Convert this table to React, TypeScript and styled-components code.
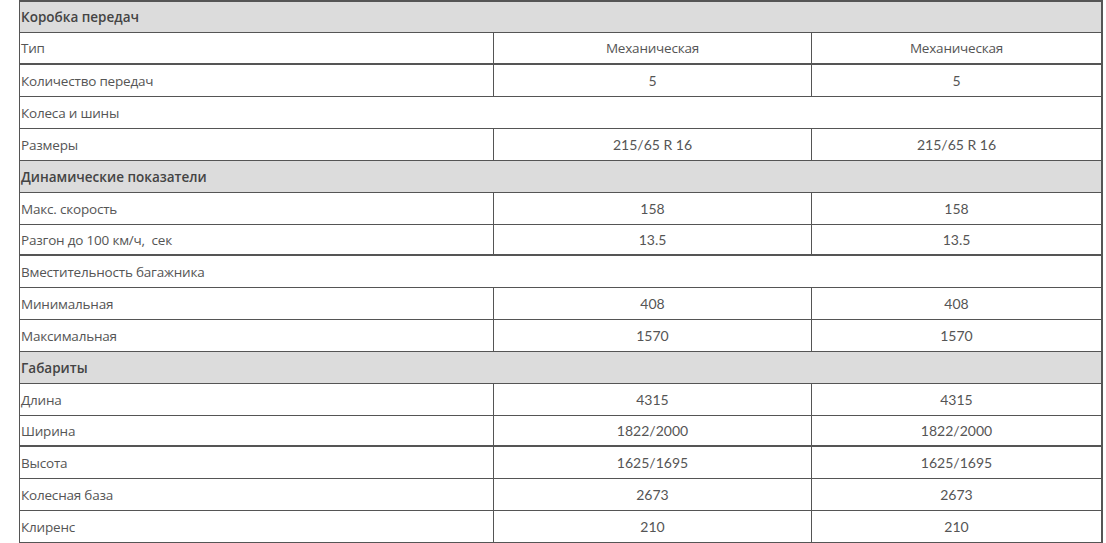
import styled, { createGlobalStyle } from 'styled-components';

const GlobalStyle = createGlobalStyle`
  html, body {
    margin: 0;
    padding: 0;
    background: #ffffff;
  }
`;

const Page = styled.div`
  padding: 0 0 0 19px;
  box-sizing: border-box;
  width: 1106px;
`;

const Table = styled.div`
  width: 1084px;
  box-sizing: border-box;
  border-top: 2px solid #555;
  border-left: 1px solid #555;
  border-right: 2px solid #555;
  display: flex;
  flex-direction: column;
`;

// height is the content height; thick rows carry a 2px bottom rule
const Row = styled.div<{ $thick?: boolean; $section?: boolean; $h?: number }>`
  display: grid;
  grid-template-columns: 473px 318px 1fr;
  height: ${(p) => p.$h ?? 31}px;
  border-bottom: ${(p) => (p.$thick ? '2px' : '1px')} solid #555;
  background: ${(p) => (p.$section ? '#dcdcdc' : '#ffffff')};
`;

const Label = styled.div<{ $span?: boolean; $bold?: boolean }>`
  grid-column: ${(p) => (p.$span ? '1 / -1' : 'auto')};
  display: flex;
  align-items: center;
  padding-left: 1px;
  white-space: pre;
  font-family: 'Open Sans', 'Liberation Sans', sans-serif;
  font-size: 13.5px;
  font-weight: ${(p) => (p.$bold ? 600 : 400)};
  color: ${(p) => (p.$bold ? '#444' : '#555')};
  letter-spacing: ${(p) => (p.$bold ? '0' : '-0.2px')};
`;

const Value = styled.div<{ $num?: boolean }>`
  display: flex;
  align-items: center;
  justify-content: center;
  border-left: 1px solid #555;
  font-family: ${(p) => (p.$num ? "Lato, 'Open Sans', sans-serif" : "'Open Sans', 'Liberation Sans', sans-serif")};
  font-size: ${(p) => (p.$num ? '14px' : '13.5px')};
  color: #555;
  letter-spacing: ${(p) => (p.$num ? '0' : '-0.2px')};
`;

type Spec =
  | { kind: 'section'; title: string; h?: number }
  | { kind: 'group'; title: string }
  | { kind: 'row'; title: string; value: string; thick?: boolean; h?: number };

const specs: Spec[] = [
  { kind: 'section', title: 'Коробка передач', h: 30 },
  { kind: 'row', title: 'Тип', value: 'Механическая', thick: true, h: 30 },
  { kind: 'row', title: 'Количество передач', value: '5' },
  { kind: 'group', title: 'Колеса и шины' },
  { kind: 'row', title: 'Размеры', value: '215/65 R 16' },
  { kind: 'section', title: 'Динамические показатели' },
  { kind: 'row', title: 'Макс. скорость', value: '158' },
  { kind: 'row', title: 'Разгон до 100 км/ч,  сек', value: '13.5', thick: true, h: 29 },
  { kind: 'group', title: 'Вместительность багажника' },
  { kind: 'row', title: 'Минимальная', value: '408' },
  { kind: 'row', title: 'Максимальная', value: '1570' },
  { kind: 'section', title: 'Габариты' },
  { kind: 'row', title: 'Длина', value: '4315' },
  { kind: 'row', title: 'Ширина', value: '1822/2000', thick: true, h: 29 },
  { kind: 'row', title: 'Высота', value: '1625/1695' },
  { kind: 'row', title: 'Колесная база', value: '2673' },
  { kind: 'row', title: 'Клиренс', value: '210' },
];

const isNumeric = (v: string) => /^[\d./\sR]+$/.test(v);

export default function App() {
  return (
    <Page>
      <GlobalStyle />
      <Table>
        {specs.map((s, i) => {
          if (s.kind === 'section') {
            return (
              <Row key={i} $section $h={s.h}>
                <Label $span $bold>
                  {s.title}
                </Label>
              </Row>
            );
          }
          if (s.kind === 'group') {
            return (
              <Row key={i}>
                <Label $span>{s.title}</Label>
              </Row>
            );
          }
          return (
            <Row key={i} $thick={s.thick} $h={s.h}>
              <Label>{s.title}</Label>
              <Value $num={isNumeric(s.value)}>{s.value}</Value>
              <Value $num={isNumeric(s.value)}>{s.value}</Value>
            </Row>
          );
        })}
      </Table>
    </Page>
  );
}
